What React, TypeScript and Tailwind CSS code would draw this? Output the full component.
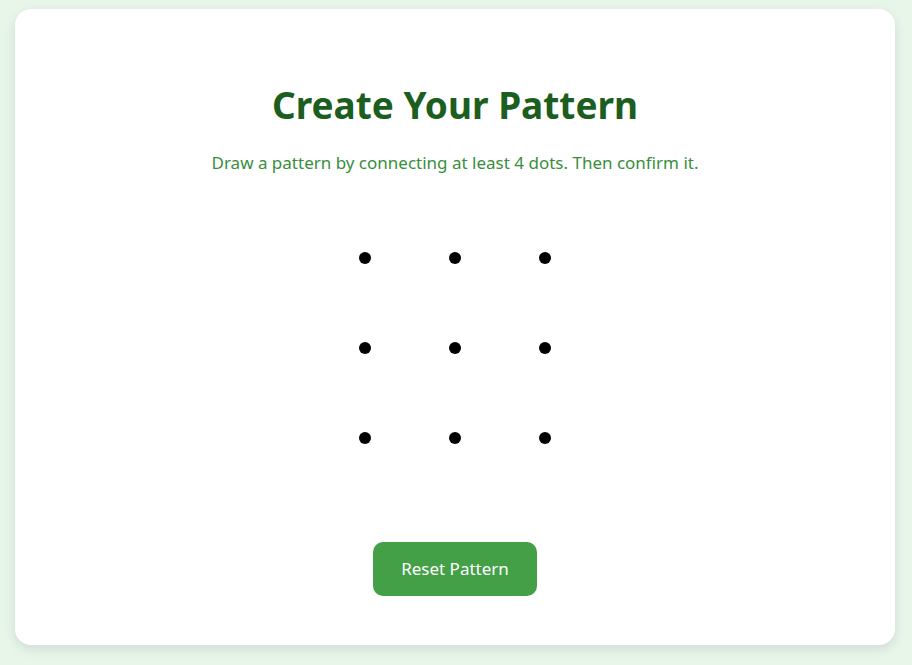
import React from 'react';

const DOTS = Array.from({ length: 9 }, (_, i) => i);

export default function App() {
  return (
    <div className="min-h-screen bg-[#e8f5e9] pt-[9px] pb-5" style={{ fontFamily: '"Noto Sans", "Open Sans", sans-serif' }}>
      <div className="ml-[15px] flex w-[880px] flex-col items-center rounded-2xl bg-white pt-[72px] pb-[49px] shadow-[0_4px_12px_rgba(0,0,0,0.1)]">
        <h1 className="text-[37px] font-bold leading-[48px] text-[#1b5e20]">Create Your Pattern</h1>
        <p className="mt-[22px] text-[17px] leading-6 text-[#388e3c]">
          Draw a pattern by connecting at least 4 dots. Then confirm it.
        </p>
        <div className="mt-[38px] grid h-[270px] w-[270px] grid-cols-3 grid-rows-3">
          {DOTS.map((i) => (
            <div key={i} className="flex items-center justify-center">
              <span className="h-3 w-3 rounded-full bg-black" />
            </div>
          ))}
        </div>
        <button className="mt-[59px] h-[54px] w-[164px] rounded-[10px] bg-[#43a047] text-[17px] text-white">
          Reset Pattern
        </button>
      </div>
    </div>
  );
}
